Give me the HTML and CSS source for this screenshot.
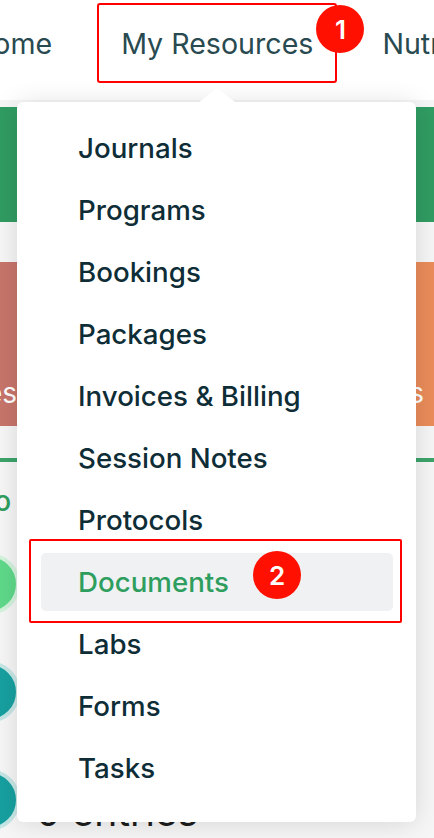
FILE: index.html
```html
<!DOCTYPE html>
<html lang="en">
<head>
  <meta charset="UTF-8">
  <meta name="viewport" content="width=device-width, initial-scale=1.0">
  <title>My Resources</title>
  <link rel="stylesheet" href="styles.css">
</head>
<body>
  <header class="topnav">
    <nav class="nav-list">
      <a href="#" class="nav-item">Home</a>
      <a href="#" class="nav-item active">My Resources<span class="step-badge step-one">1</span></a>
      <a href="#" class="nav-item">Nutrition</a>
    </nav>
  </header>

  <main class="page">
    <div class="banner"></div>

    <div class="cards">
      <div class="card card-red"><span>Notes</span></div>
      <div class="card card-orange"><span>Labs</span></div>
    </div>

    <div class="tab-bar"></div>

    <section class="entries">
      <a href="#" class="info-link">Info</a>
      <ul class="avatar-list">
        <li><span class="avatar avatar-green"></span></li>
        <li><span class="avatar avatar-teal"></span></li>
        <li><span class="avatar avatar-teal"></span><span class="entry-count">0 entries</span></li>
      </ul>
    </section>
  </main>

  <!-- Dropdown for My Resources -->
  <div class="dropdown">
    <ul class="dropdown-list">
      <li><a href="#">Journals</a></li>
      <li><a href="#">Programs</a></li>
      <li><a href="#">Bookings</a></li>
      <li><a href="#">Packages</a></li>
      <li><a href="#">Invoices &amp; Billing</a></li>
      <li><a href="#">Session Notes</a></li>
      <li><a href="#">Protocols</a></li>
      <li class="selected"><a href="#">Documents</a><span class="step-badge step-two">2</span></li>
      <li><a href="#">Labs</a></li>
      <li><a href="#">Forms</a></li>
      <li><a href="#">Tasks</a></li>
    </ul>
  </div>
</body>
</html>
```

FILE: styles.css
```css
body {
  font-family: Inter, "Noto Sans", sans-serif;
  margin: 0;
  padding: 0;
  width: 434px;
  height: 838px;
  overflow: hidden;
  background: #f6f6f7;
  position: relative;
}

a {
  text-decoration: none;
}

.topnav {
  background: white;
  height: 100px;
}

.nav-list {
  display: flex;
  gap: 21px;
  padding-top: 3px;
  margin-left: -52px;
  white-space: nowrap;
}

.nav-item {
  position: relative;
  display: flex;
  align-items: center;
  height: 76px;
  padding: 0 22px;
  border: 2px solid transparent;
  border-radius: 3px;
  font-size: 28.6px;
  color: #284a50;
}

.nav-item.active {
  border-color: #ff0000;
}

.step-badge {
  position: absolute;
  width: 48px;
  height: 48px;
  border-radius: 50%;
  background: #ff1000;
  color: white;
  font-size: 26px;
  font-weight: 600;
  display: flex;
  align-items: center;
  justify-content: center;
}

.step-one {
  top: 0;
  right: -29px;
}

.banner {
  background: #309c62;
  height: 115px;
  margin-top: 7px;
}

.cards {
  display: flex;
  gap: 16px;
  margin: 40px 0 0 -350px;
}

.card {
  flex: 0 0 391px;
  height: 164px;
  display: flex;
  align-items: flex-end;
  justify-content: flex-end;
  box-sizing: border-box;
  padding: 0 24px 19px 0;
  color: white;
  font-size: 28px;
  line-height: 1;
}

.card-red {
  background: #c8756b;
}

.card-orange {
  background: #ea8c5a;
}

.tab-bar {
  height: 32px;
  border-bottom: 4px solid #3ca36a;
}

.entries {
  padding-top: 22px;
}

.info-link {
  display: block;
  margin-left: -40px;
  font-size: 28px;
  font-weight: 500;
  color: #2e9e5e;
  line-height: 34px;
}

.avatar-list {
  list-style: none;
  margin: 12px 0 0;
  padding: 0;
}

.avatar-list li {
  height: 108px;
  display: flex;
  align-items: center;
}

.avatar {
  flex: none;
  width: 54px;
  height: 54px;
  margin-left: -42px;
  border-radius: 50%;
}

.avatar-green {
  background: #5fd98a;
  border: 4px solid #d3f3dd;
}

.avatar-teal {
  background: #17a0a0;
  border: 4px solid #c6e6e6;
}

.entry-count {
  align-self: flex-end;
  margin: 0 0 23px 16px;
  font-size: 39px;
  line-height: 1;
  color: #1d1d1d;
  white-space: nowrap;
}

/* dropdown menu */
.dropdown {
  position: absolute;
  top: 102px;
  left: 17px;
  width: 399px;
  height: 720px;
  box-sizing: border-box;
  padding: 17px 23px 25px 24px;
  background: white;
  border-radius: 6px;
  box-shadow: 0 2px 26px rgba(0, 0, 0, 0.13);
}

.dropdown::before {
  content: "";
  position: absolute;
  top: -14px;
  left: 182px;
  border-left: 18px solid transparent;
  border-right: 18px solid transparent;
  border-bottom: 14px solid white;
}

.dropdown-list {
  list-style: none;
  margin: 0;
  padding: 0;
  display: flex;
  flex-direction: column;
  gap: 4px;
}

.dropdown-list li {
  position: relative;
  height: 58px;
  display: flex;
  align-items: center;
  padding-left: 37px;
  border-radius: 5px;
}

.dropdown-list a {
  font-size: 27.7px;
  font-weight: 500;
  color: #0e2d36;
}

.dropdown-list li.selected {
  background: #f0f1f3;
}

.dropdown-list li.selected a {
  color: #2e9e5e;
}

.dropdown-list li.selected::after {
  content: "";
  position: absolute;
  top: -14px;
  left: -12px;
  right: -9px;
  bottom: -12px;
  border: 2px solid #ff0000;
  border-radius: 2px;
}

.step-two {
  top: -2px;
  left: 212px;
}
```
